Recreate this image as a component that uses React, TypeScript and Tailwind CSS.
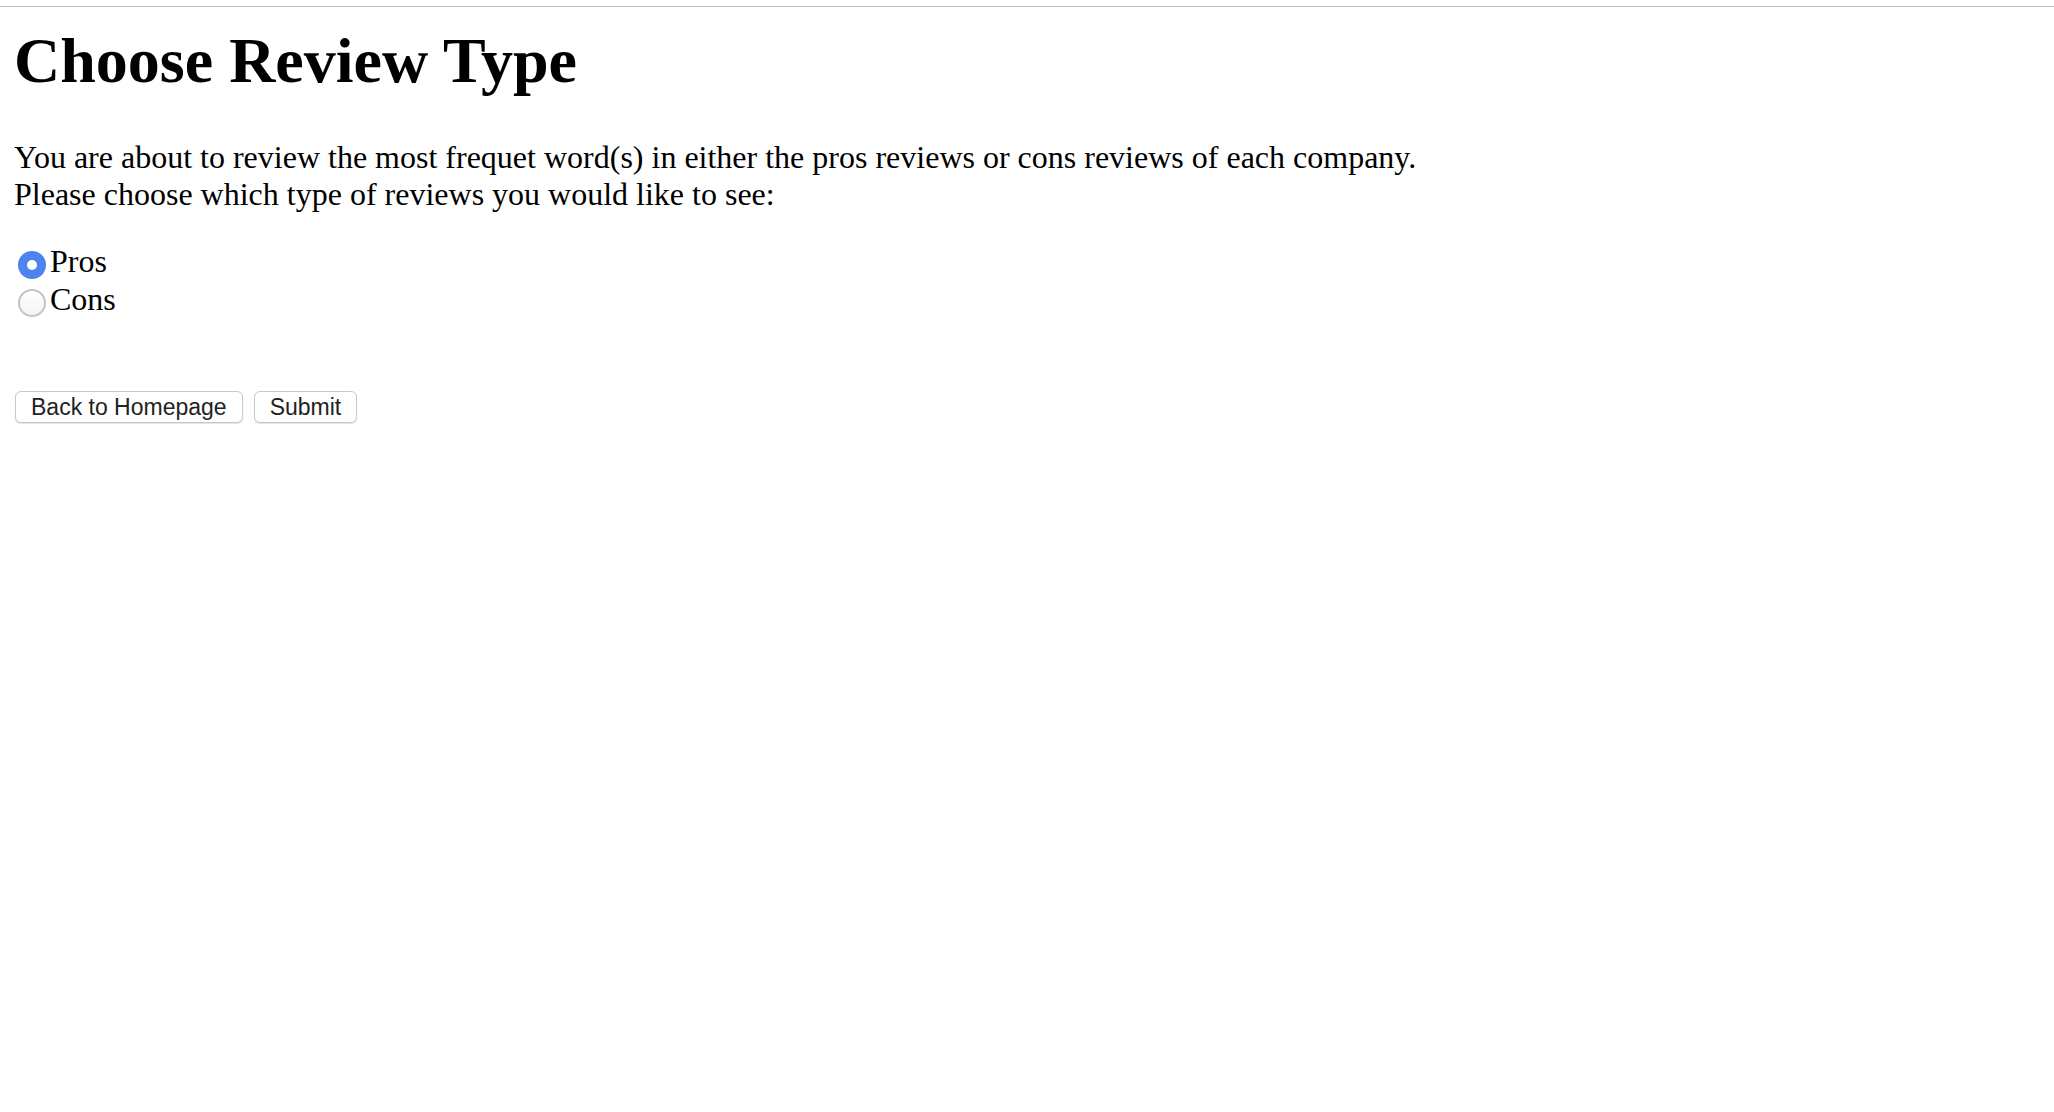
import { useState } from 'react'

const serif = 'font-["Liberation_Serif","Times_New_Roman",serif]'

function Radio({ checked }: { checked: boolean }) {
  if (checked) {
    return (
      <span className="mt-[9px] flex h-[28px] w-[28px] shrink-0 items-center justify-center rounded-full bg-[#4d84f0]">
        <span className="h-[10px] w-[10px] rounded-full bg-white" />
      </span>
    )
  }
  return (
    <span className="mt-[9px] block h-[28px] w-[28px] shrink-0 rounded-full border-2 border-[#c4c4c4] bg-gradient-to-b from-white to-[#f4f4f4]" />
  )
}

export default function App() {
  const [choice, setChoice] = useState<'pros' | 'cons'>('pros')

  return (
    <div className="min-h-screen bg-white pt-[6px] text-black">
      <div className="h-px w-full bg-[#c2c2c2]" />

      <div className={`px-[14px] ${serif}`}>
        <h1 className="mt-[17px] text-[64px] font-bold leading-[74px]">Choose Review Type</h1>

        <p className="mt-[41px] text-[32px] leading-[37px]">
          You are about to review the most frequet word(s) in either the pros reviews or cons reviews of each company.
          <br />
          Please choose which type of reviews you would like to see:
        </p>

        <div className="mt-[29px] flex flex-col text-[32px] leading-[38px]">
          {(['pros', 'cons'] as const).map((key) => (
            <label key={key} className="flex cursor-default items-start gap-[4px] pl-[4px]" onClick={() => setChoice(key)}>
              <Radio checked={choice === key} />
              <span>{key === 'pros' ? 'Pros' : 'Cons'}</span>
            </label>
          ))}
        </div>

        <div className="mt-[73px] flex gap-[11px] pl-[1px] font-['Liberation_Sans',Arial,sans-serif] text-[23px] text-[#222]">
          <button className="h-[32px] rounded-[6px] border border-[#c8c8c8] bg-white px-[15px] leading-[30px] shadow-[0_1px_1px_rgba(0,0,0,0.12)]">
            Back to Homepage
          </button>
          <button className="h-[32px] rounded-[6px] border border-[#c8c8c8] bg-white px-[15px] leading-[30px] shadow-[0_1px_1px_rgba(0,0,0,0.12)]">
            Submit
          </button>
        </div>
      </div>
    </div>
  )
}
